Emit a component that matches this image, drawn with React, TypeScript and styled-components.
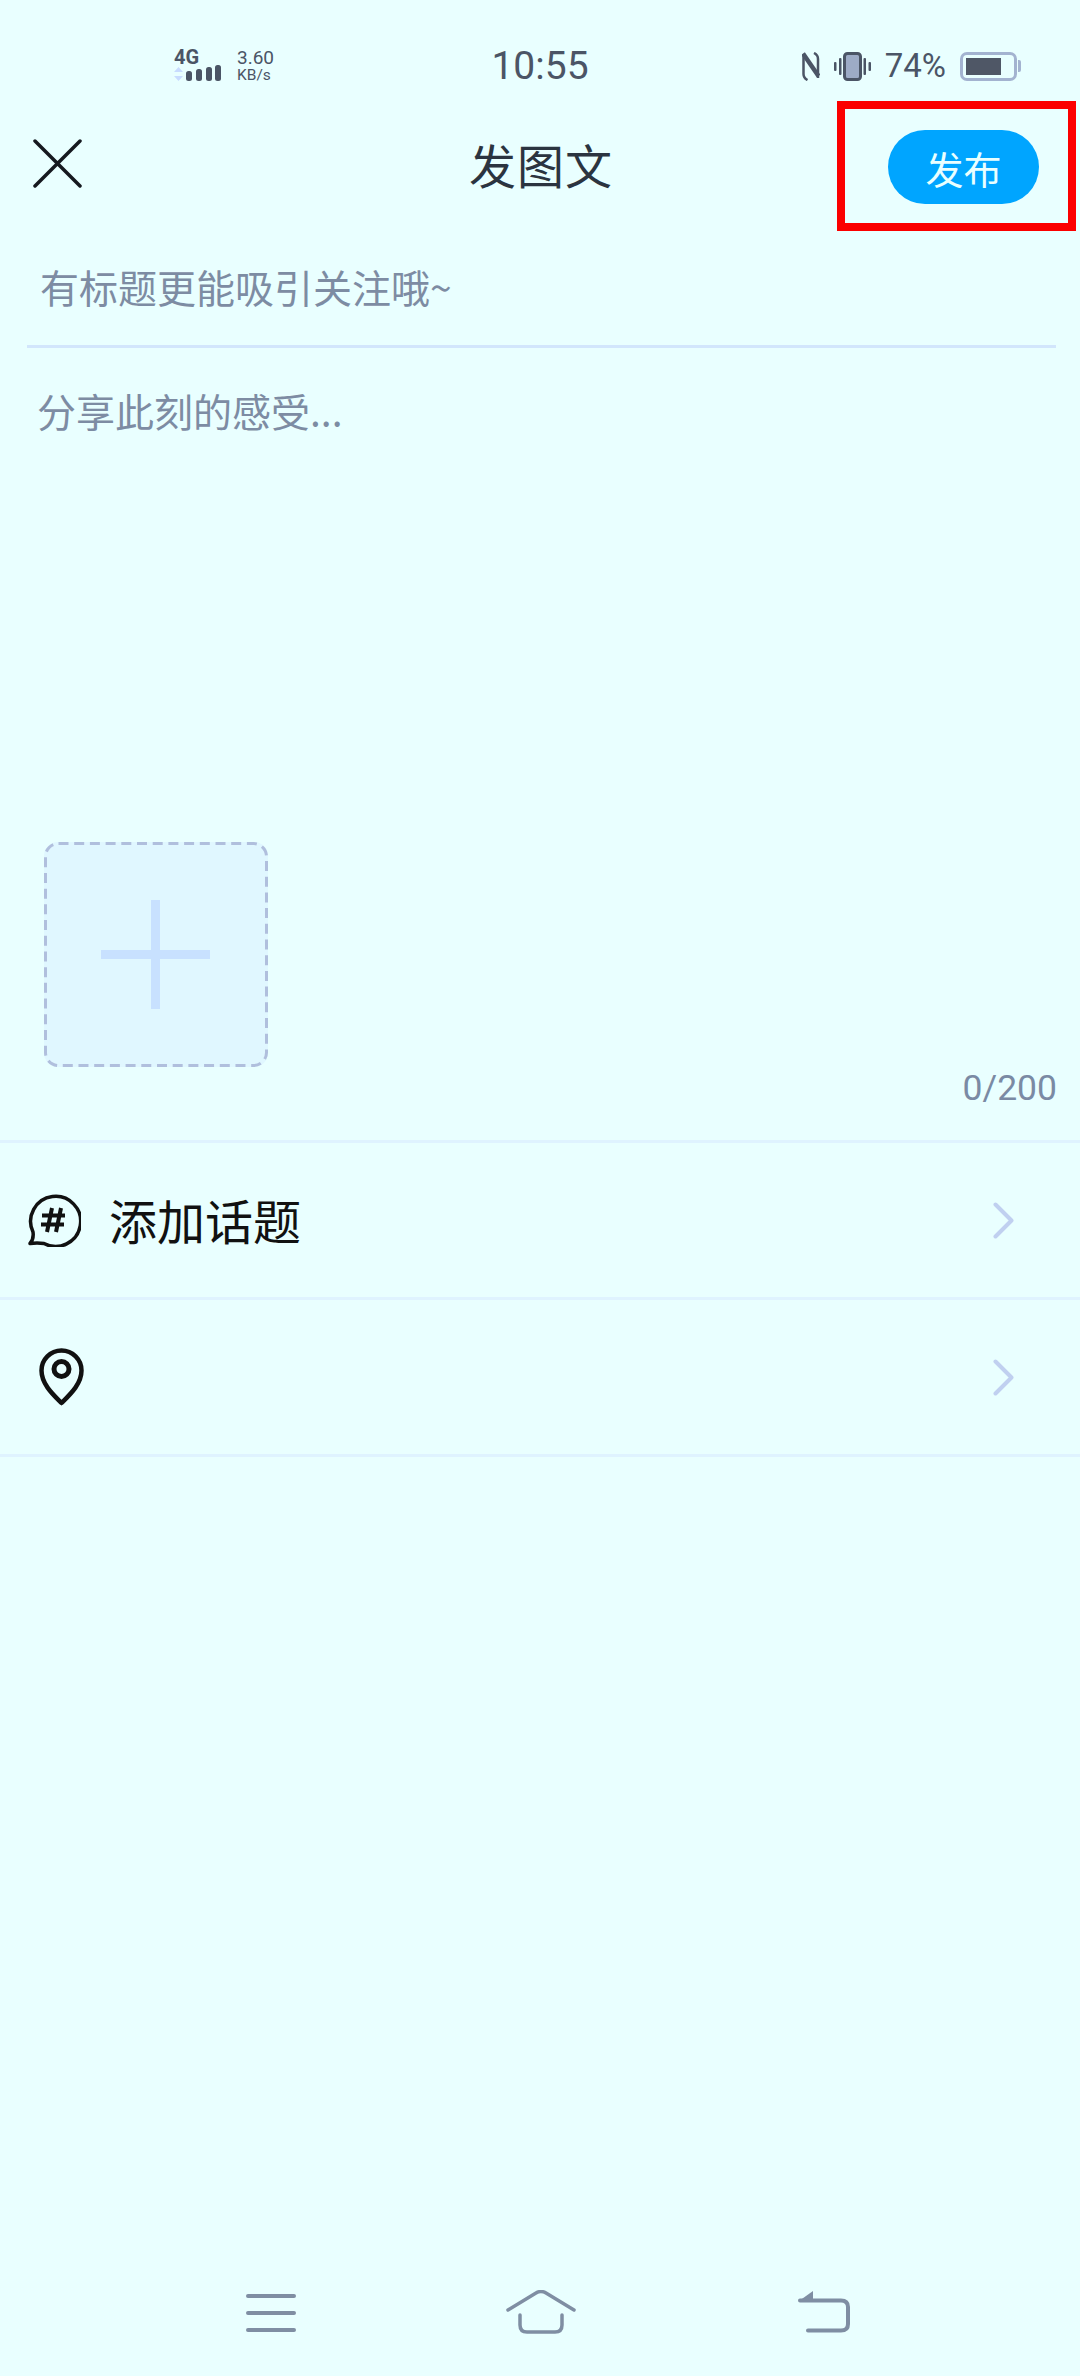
import React from 'react';
import styled, { createGlobalStyle } from 'styled-components';

const cjk = '"Noto Sans CJK SC", "Noto Sans", sans-serif';
const latin = 'Roboto, "Noto Sans", sans-serif';

const GlobalStyle = createGlobalStyle`
  html, body {
    margin: 0;
    padding: 0;
    background-color: #e9ffff;
  }
`;

const Page = styled.div`
  background-color: #e9ffff;
  display: flex;
  flex-direction: column;
  font-family: ${cjk};
  height: 2376px;
  overflow: hidden;
  width: 1080px;
`;

const StatusBar = styled.div`
  align-items: center;
  box-sizing: border-box;
  color: #4b5566;
  display: grid;
  font-family: ${latin};
  grid-template-columns: 1fr auto 1fr;
  height: 101px;
  padding: 31px 60px 0;
`;

const StatusLeft = styled.div`
  align-items: center;
  display: flex;
  gap: 16px;
  padding-left: 114px;
`;

const Network = styled.div`
  display: flex;
  flex-direction: column;
`;

const NetworkLabel = styled.span`
  font-size: 20px;
  font-weight: 700;
  line-height: 14px;
`;

const Speed = styled.div`
  display: flex;
  flex-direction: column;
  gap: 4px;
`;

const SpeedValue = styled.span`
  font-size: 19px;
  line-height: 14px;
`;

const SpeedUnit = styled.span`
  font-size: 15.5px;
  line-height: 12px;
`;

const Clock = styled.span`
  font-size: 39px;
  line-height: 40px;
`;

const StatusRight = styled.div`
  align-items: center;
  display: flex;
  gap: 14px;
  justify-content: flex-end;
`;

const Percent = styled.span`
  font-size: 33px;
  line-height: 32px;
`;

const Battery = styled.div`
  border: 3px solid #a3b3d0;
  border-radius: 7px;
  box-sizing: border-box;
  height: 29px;
  margin-right: 3px;
  padding: 3px;
  position: relative;
  width: 57px;

  &::after {
    background-color: #a3b3d0;
    border-radius: 0 2px 2px 0;
    content: '';
    height: 12px;
    position: absolute;
    right: -7px;
    top: 5px;
    width: 3px;
  }
`;

const BatteryLevel = styled.div<{ $level: number }>`
  background-color: #4f5766;
  height: 100%;
  width: ${(p) => p.$level}%;
`;

const Header = styled.header`
  align-items: center;
  display: flex;
  height: 128px;
  justify-content: center;
  position: relative;
`;

const CloseIcon = styled.svg`
  left: 33px;
  position: absolute;
  top: 38px;
`;

const Title = styled.h1`
  color: #2b3440;
  font-size: 47px;
  font-weight: 400;
  letter-spacing: 1px;
  margin: 0 0 4px 2px;
`;

const PublishFrame = styled.div`
  align-items: center;
  border: 8px solid #fb0000;
  box-sizing: border-box;
  display: flex;
  height: 130px;
  justify-content: center;
  padding: 2px 26px 0 40px;
  position: absolute;
  right: 4px;
  top: 0;
  width: 239px;
`;

const PublishButton = styled.button`
  background-color: #00a5ff;
  border: 0;
  border-radius: 37px;
  color: #e9ffff;
  flex: none;
  font-family: ${cjk};
  font-size: 38px;
  font-weight: 400;
  height: 74px;
  padding: 0;
  width: 151px;
`;

const TitleField = styled.div`
  align-items: center;
  border-bottom: 3px solid #d2e6fc;
  box-sizing: border-box;
  color: #7d8ca3;
  display: flex;
  font-size: 39px;
  height: 119px;
  margin: 0 24px 0 27px;
  padding: 0 0 2px 13px;
`;

const Body = styled.div`
  display: flex;
  flex: 0 0 792px;
  flex-direction: column;
`;

const Placeholder = styled.div`
  color: #7d8ca3;
  font-size: 39px;
  line-height: 54px;
  padding: 35px 0 0 37px;
`;

const BodyFooter = styled.div`
  align-items: flex-end;
  display: flex;
  justify-content: space-between;
  margin-top: auto;
  padding: 0 23px 33px 44px;
`;

const AddImage = styled.div`
  background-color: #e0f7ff;
  border-radius: 14px;
  height: 225px;
  margin-bottom: 40px;
  position: relative;
  width: 224px;

  &::before,
  &::after {
    background-color: #c8e1ff;
    content: '';
    position: absolute;
  }

  &::before {
    height: 109px;
    left: 107px;
    top: 58px;
    width: 9px;
  }

  &::after {
    height: 9px;
    left: 57px;
    top: 108px;
    width: 109px;
  }
`;

const DashedOutline = styled.svg`
  inset: 0;
  position: absolute;
`;

const Counter = styled.span`
  color: #7a8aa4;
  font-family: ${latin};
  font-size: 35.5px;
  line-height: 38px;
`;

const Row = styled.div`
  align-items: center;
  border-top: 3px solid #dff3ff;
  box-sizing: border-box;
  display: flex;
  height: 157px;
  padding-right: 65px;
`;

const LastRow = styled(Row)`
  border-bottom: 3px solid #dff3ff;
  height: 160px;
`;

const RowIcon = styled.svg<{ $left: number }>`
  flex: none;
  margin-left: ${(p) => p.$left}px;
`;

const RowLabel = styled.span`
  color: #111;
  font-size: 48px;
  margin-bottom: 2px;
  margin-left: 28px;
`;

const Chevron = styled.svg`
  flex: none;
  margin-left: auto;
`;

const NavBar = styled.nav`
  align-items: center;
  display: flex;
  margin-top: auto;
  padding: 0 0 42px 246px;
`;

const NavSlot = styled.div<{ $gap: number }>`
  display: flex;
  margin-right: ${(p) => p.$gap}px;
`;

const muted = '#7f8ea3';

const SignalIcon = () => (
  <svg width="47" height="18" viewBox="0 0 47 18">
    <path d="M4.500 3 9 8H0zM4.500 17 0 12h9z" fill="#c8dcff" />
    <rect x="12" y="7" width="6" height="10" rx="2.500" fill="#4b5566" />
    <rect x="22" y="5" width="6" height="12" rx="2.500" fill="#4b5566" />
    <rect x="32" y="3" width="6" height="14" rx="2.500" fill="#4b5566" />
    <rect x="41" y="1" width="6" height="16" rx="2.500" fill="#4b5566" />
  </svg>
);

const NfcIcon = () => (
  <svg width="18" height="29" viewBox="0 0 18 29" fill="none" stroke="#4b5566">
    <path d="M1.500 3v19q0 4 4 6" strokeWidth="2.5" />
    <path d="M16 26V7q0-4-4-6" strokeWidth="2.5" />
    <path d="M1 1.500 16.500 24" strokeWidth="4.5" />
  </svg>
);

const VibrateIcon = () => (
  <svg width="37" height="29" viewBox="0 0 37 29">
    <rect x="10.500" y="1.500" width="16" height="26" rx="3" fill="#9dabc6" stroke="#4b5566" strokeWidth="3" />
    <rect x="0" y="10" width="2.500" height="9" rx="1" fill="#4b5566" />
    <rect x="5" y="6" width="2.500" height="17" rx="1" fill="#4b5566" />
    <rect x="29.500" y="6" width="2.500" height="17" rx="1" fill="#4b5566" />
    <rect x="34.500" y="10" width="2.500" height="9" rx="1" fill="#4b5566" />
  </svg>
);

const TopicIcon = () => (
  <RowIcon $left={27} width="54" height="54" viewBox="0 0 54 54" fill="none" stroke="#111" strokeWidth="3.5">
    <path d="M6 39A25 25 0 1 1 17 50.500Q10 49.500 3 50.500 7 46 6 39Z" strokeLinejoin="round" />
    <path d="M15 22.500h23M14 31.500h23M25 15l-5 24M34 15l-5 24" strokeWidth="4" />
  </RowIcon>
);

const PinIcon = () => (
  <RowIcon $left={39} width="45" height="58" viewBox="0 0 45 58" fill="none" stroke="#111" strokeWidth="4.5">
    <path d="M22.500 55C14 46.500 2.500 36 2.500 22.500a20 20 0 0 1 40 0C42.500 36 31 46.500 22.500 55Z" strokeLinejoin="round" />
    <circle cx="22.500" cy="21" r="7.500" strokeWidth="5" />
  </RowIcon>
);

const RowChevron = () => (
  <Chevron width="22" height="37" viewBox="0 0 22 37" fill="none" stroke="#c0d0f0" strokeWidth="4" strokeLinecap="round" strokeLinejoin="round">
    <path d="M2.500 2.500 18.500 18.500 2.500 34.500" />
  </Chevron>
);

const App = () => (
  <Page>
    <GlobalStyle />
    <StatusBar>
      <StatusLeft>
        <Network>
          <NetworkLabel>4G</NetworkLabel>
          <SignalIcon />
        </Network>
        <Speed>
          <SpeedValue>3.60</SpeedValue>
          <SpeedUnit>KB/s</SpeedUnit>
        </Speed>
      </StatusLeft>
      <Clock>10:55</Clock>
      <StatusRight>
        <NfcIcon />
        <VibrateIcon />
        <Percent>74%</Percent>
        <Battery>
          <BatteryLevel $level={78} />
        </Battery>
      </StatusRight>
    </StatusBar>
    <Header>
      <CloseIcon width="49" height="49" viewBox="0 0 49 49" fill="none" stroke="#15191f" strokeWidth="3.500" strokeLinecap="round">
        <path d="M2 2 47 47M47 2 2 47" />
      </CloseIcon>
      <Title>发图文</Title>
      <PublishFrame>
        <PublishButton>发布</PublishButton>
      </PublishFrame>
    </Header>
    <TitleField>有标题更能吸引关注哦~</TitleField>
    <Body>
      <Placeholder>分享此刻的感受...</Placeholder>
      <BodyFooter>
        <AddImage>
          <DashedOutline width="224" height="225" viewBox="0 0 224 225" fill="none">
            <rect x="1.500" y="1.500" width="221" height="222" rx="13" stroke="#b0bfdd" strokeWidth="3" strokeDasharray="10 5.700" />
          </DashedOutline>
        </AddImage>
        <Counter>0/200</Counter>
      </BodyFooter>
    </Body>
    <Row>
      <TopicIcon />
      <RowLabel>添加话题</RowLabel>
      <RowChevron />
    </Row>
    <LastRow>
      <PinIcon />
      <RowChevron />
    </LastRow>
    <NavBar>
      <NavSlot $gap={210}>
        <svg width="50" height="40" viewBox="0 0 50 40" stroke={muted} strokeWidth="4" strokeLinecap="round">
          <path d="M2 4h46M2 21h46M2 38h46" />
        </svg>
      </NavSlot>
      <NavSlot $gap={222}>
        <svg width="70" height="44" viewBox="0 0 70 44" fill="none" stroke={muted} strokeWidth="3.500" strokeLinecap="round" strokeLinejoin="round">
          <path d="M2 20 30 3Q35 0 40 3L68 20" />
          <path d="M14 25V35Q14 42 21 42H49Q56 42 56 35V25" />
        </svg>
      </NavSlot>
      <NavSlot $gap={0}>
        <svg width="52" height="42" viewBox="0 0 52 42" fill="none" stroke={muted} strokeWidth="4" strokeLinecap="round">
          <path d="M2 9.500H43Q50 9.500 50 16V33Q50 39.500 43 39.500H10" />
          <path d="M1 10 15 0V10Z" fill={muted} stroke="none" />
        </svg>
      </NavSlot>
    </NavBar>
  </Page>
);

export default App;
